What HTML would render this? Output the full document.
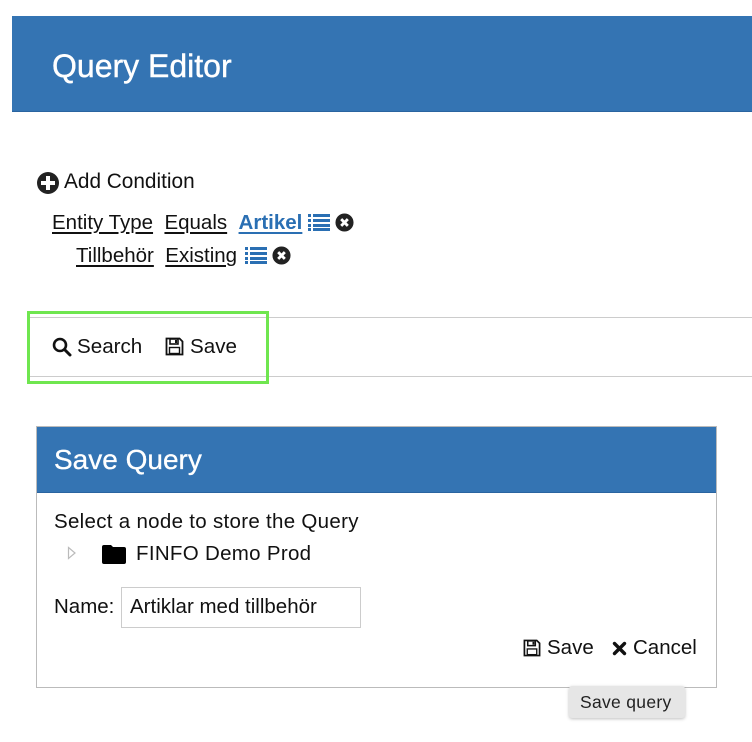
<!DOCTYPE html>
<html><head><meta charset="utf-8"><style>
*{margin:0;padding:0;box-sizing:border-box}
body{width:752px;height:742px;background:#fff;font-family:"Liberation Sans",sans-serif;color:#111;position:relative;overflow:hidden}
.a{position:absolute;white-space:nowrap}
u{text-decoration:underline;text-underline-offset:3px}
svg{position:absolute}
</style></head><body>
<div class="a" style="left:12px;top:16px;width:740px;height:96px;background:#3474b3;border-bottom:1px solid #2a64a0"></div>
<div class="a" style="left:52px;top:48px;font-size:32px;color:#fff;line-height:36px;-webkit-text-stroke:0.4px #fff">Query Editor</div>

<svg style="left:36px;top:171px" width="24" height="24" viewBox="0 0 24 24"><circle cx="12" cy="12" r="11" fill="#222"/><rect x="10" y="5" width="4" height="14" fill="#fff"/><rect x="5" y="10" width="14" height="4" fill="#fff"/></svg>
<div class="a" style="left:64px;top:170px;font-size:20.8px;line-height:24px">Add Condition</div>

<div class="a" style="left:52px;top:211px;font-size:20.5px;line-height:24px"><u>Entity Type</u>&nbsp; <u>Equals</u>&nbsp; <u style="color:#2a6fb3;font-weight:bold">Artikel</u></div>
<svg style="left:308px;top:213px" width="22" height="18" viewBox="0 0 22 18"><g fill="#2a6fb3"><rect x="0" y="1" width="3" height="3"/><rect x="5" y="1" width="17" height="3"/><rect x="0" y="6" width="3" height="3"/><rect x="5" y="6" width="17" height="3"/><rect x="0" y="11" width="3" height="3"/><rect x="5" y="11" width="17" height="3"/><rect x="0" y="15" width="3" height="3"/><rect x="5" y="15" width="17" height="3"/></g></svg>
<svg style="left:335px;top:213px" width="19" height="19" viewBox="0 0 20 20"><circle cx="10" cy="10" r="9.5" fill="#222"/><path d="M6.5 6.5L13.5 13.5M13.5 6.5L6.5 13.5" stroke="#fff" stroke-width="3"/></svg>

<div class="a" style="left:76px;top:244px;font-size:20.5px;line-height:24px"><u>Tillbehör</u>&nbsp; <u>Existing</u></div>
<svg style="left:245px;top:246px" width="22" height="18" viewBox="0 0 22 18"><g fill="#2a6fb3"><rect x="0" y="1" width="3" height="3"/><rect x="5" y="1" width="17" height="3"/><rect x="0" y="6" width="3" height="3"/><rect x="5" y="6" width="17" height="3"/><rect x="0" y="11" width="3" height="3"/><rect x="5" y="11" width="17" height="3"/><rect x="0" y="15" width="3" height="3"/><rect x="5" y="15" width="17" height="3"/></g></svg>
<svg style="left:272px;top:246px" width="19" height="19" viewBox="0 0 20 20"><circle cx="10" cy="10" r="9.5" fill="#222"/><path d="M6.5 6.5L13.5 13.5M13.5 6.5L6.5 13.5" stroke="#fff" stroke-width="3"/></svg>

<div class="a" style="left:28px;top:317px;width:724px;height:1px;background:#ccc"></div>
<div class="a" style="left:28px;top:376px;width:724px;height:1px;background:#ccc"></div>
<div class="a" style="left:27px;top:311px;width:242px;height:73px;border:3px solid #6fe64f"></div>
<svg style="left:52px;top:337px" width="20" height="20" viewBox="0 0 20 20"><circle cx="8" cy="8" r="6" fill="none" stroke="#111" stroke-width="2.6"/><path d="M12.5 12.5L18 18" stroke="#111" stroke-width="3" stroke-linecap="round"/></svg>
<div class="a" style="left:77px;top:335px;font-size:20.6px;line-height:24px">Search</div>
<svg style="left:165px;top:337px" width="19" height="19" viewBox="0 0 19 19"><path d="M1.5 1.5H14.5L17.5 4.5V17.5H1.5Z" fill="none" stroke="#111" stroke-width="1.8"/><rect x="5" y="2" width="8" height="5" fill="none" stroke="#111" stroke-width="1.6"/><rect x="10" y="3" width="2" height="3" fill="#111"/><rect x="4.5" y="10.5" width="10" height="6" fill="none" stroke="#111" stroke-width="1.4"/></svg>
<div class="a" style="left:190px;top:335px;font-size:20.6px;line-height:24px">Save</div>

<div class="a" style="left:36px;top:426px;width:681px;height:262px;border:1px solid #bbb"></div>
<div class="a" style="left:37px;top:427px;width:679px;height:66px;background:#3474b3;border-bottom:1px solid #2a64a0"></div>
<div class="a" style="left:54px;top:444px;font-size:28px;color:#fff;line-height:32px;-webkit-text-stroke:0.3px #fff">Save Query</div>
<div class="a" style="left:54px;top:511px;font-size:20.5px;line-height:22px;letter-spacing:0.3px">Select a node to store the Query</div>
<svg style="left:67px;top:546px" width="10" height="14" viewBox="0 0 10 14"><path d="M1.5 1.5L8 7L1.5 12.5Z" fill="none" stroke="#bbb" stroke-width="1.2"/></svg>
<svg style="left:101px;top:543px" width="26" height="22" viewBox="0 0 26 22"><path d="M1 4Q1 2 3 2H10L12 4H23Q25 4 25 6V19Q25 21 23 21H3Q1 21 1 19Z" fill="#000"/></svg>
<div class="a" style="left:136px;top:543px;font-size:20.5px;line-height:22px;letter-spacing:0.3px">FINFO Demo Prod</div>
<div class="a" style="left:54px;top:596px;font-size:20.5px;line-height:22px">Name:</div>
<div class="a" style="left:121px;top:587px;width:240px;height:41px;border:1px solid #ccc"></div>
<div class="a" style="left:130px;top:596px;font-size:20.5px;line-height:22px">Artiklar med tillbehör</div>
<svg style="left:523px;top:639px" width="18" height="18" viewBox="0 0 19 19"><path d="M1.5 1.5H14.5L17.5 4.5V17.5H1.5Z" fill="none" stroke="#111" stroke-width="1.8"/><rect x="5" y="2" width="8" height="5" fill="none" stroke="#111" stroke-width="1.6"/><rect x="10" y="3" width="2" height="3" fill="#111"/><rect x="4.5" y="10.5" width="10" height="6" fill="none" stroke="#111" stroke-width="1.4"/></svg>
<div class="a" style="left:547px;top:637px;font-size:20.5px;line-height:22px">Save</div>
<svg style="left:612px;top:641px" width="15" height="15" viewBox="0 0 15 15"><path d="M2.5 2.5L12.5 12.5M12.5 2.5L2.5 12.5" stroke="#111" stroke-width="3.4" stroke-linecap="round"/></svg>
<div class="a" style="left:633px;top:637px;font-size:20.5px;line-height:22px">Cancel</div>

<div class="a" style="left:569px;top:686px;width:116px;height:32px;background:#e6e6e6;border-radius:3px;box-shadow:0 1px 3px rgba(0,0,0,.25)"></div>
<div class="a" style="left:580px;top:692px;font-size:17.5px;line-height:20px;color:#222;letter-spacing:0.3px">Save query</div>
</body></html>
